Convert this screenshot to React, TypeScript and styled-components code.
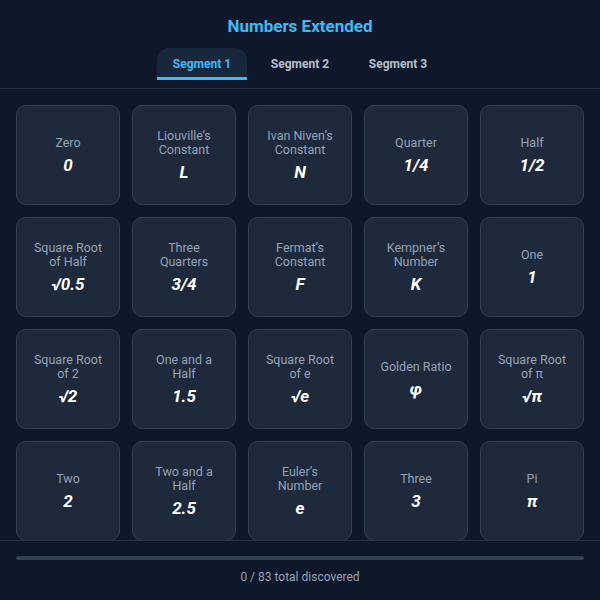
import {FC, useState} from 'react'
import styled, {createGlobalStyle} from 'styled-components'

const GlobalStyle = createGlobalStyle`
    html, body {
        margin: 0;
        padding: 0;
        background: #0f172a;
        font-family: Roboto, "Liberation Sans", sans-serif;
    }
    * {
        box-sizing: border-box;
    }
`

interface NumberItem {
    label: string
    value: string
}

const items: NumberItem[] = [
    {label: 'Zero', value: '0'},
    {label: 'Liouville\u2019s Constant', value: 'L'},
    {label: 'Ivan Niven\u2019s Constant', value: 'N'},
    {label: 'Quarter', value: '1/4'},
    {label: 'Half', value: '1/2'},
    {label: 'Square Root of Half', value: '\u221A0.5'},
    {label: 'Three Quarters', value: '3/4'},
    {label: 'Fermat\u2019s Constant', value: 'F'},
    {label: 'Kempner\u2019s Number', value: 'K'},
    {label: 'One', value: '1'},
    {label: 'Square Root of 2', value: '\u221A2'},
    {label: 'One and a Half', value: '1.5'},
    {label: 'Square Root of e', value: '\u221Ae'},
    {label: 'Golden Ratio', value: '\u03C6'},
    {label: 'Square Root of \u03C0', value: '\u221A\u03C0'},
    {label: 'Two', value: '2'},
    {label: 'Two and a Half', value: '2.5'},
    {label: 'Euler\u2019s Number', value: 'e'},
    {label: 'Three', value: '3'},
    {label: 'Pi', value: '\u03C0'},
]

const segments = ['Segment 1', 'Segment 2', 'Segment 3']

const App: FC = () => {
    const [active, setActive] = useState(0)

    return (
        <>
            <GlobalStyle/>
            <Page>
                <Header>
                    <Title>Numbers Extended</Title>
                    <Tabs>
                        {segments.map((s, i) => (
                            <Tab key={s} $active={i === active} onClick={() => setActive(i)}>
                                {s}
                            </Tab>
                        ))}
                    </Tabs>
                </Header>
                <Scroll>
                    <Grid>
                        {items.map((item) => (
                            <Card key={item.label}>
                                <Label>{item.label}</Label>
                                <Value>{item.value}</Value>
                            </Card>
                        ))}
                    </Grid>
                </Scroll>
                <Footer>
                    <Progress>
                        <ProgressFill style={{width: `${(0 / 83) * 100}%`}}/>
                    </Progress>
                    <Count>0 / 83 total discovered</Count>
                </Footer>
            </Page>
        </>
    )
}

const Page = styled.div`
    display: flex;
    flex-direction: column;
    height: 100vh;
    background: #0f172a;
    color: #e2e8f0;
`

const Header = styled.div`
    display: flex;
    flex-direction: column;
    align-items: center;
    gap: 11px;
    padding: 15px 16px 8px;
    border-bottom: 1px solid #283244;
`

const Title = styled.h1`
    margin: 0;
    font-size: 17px;
    line-height: 22px;
    font-weight: 700;
    color: #38bdf8;
`

const Tabs = styled.div`
    display: flex;
    gap: 8px;
`

const Tab = styled.button<{ $active: boolean }>`
    width: 90px;
    height: 32px;
    padding: 2px 0 0;
    border: none;
    border-bottom: 3px solid ${(p) => (p.$active ? '#38bdf8' : 'transparent')};
    border-radius: 12px 12px 0 0;
    background: ${(p) => (p.$active ? '#17283d' : 'transparent')};
    color: ${(p) => (p.$active ? '#38bdf8' : '#b8c0cc')};
    font-family: inherit;
    font-size: 12px;
    font-weight: 700;
    cursor: pointer;
`

const Scroll = styled.div`
    flex: 1;
    overflow: hidden;
    border-bottom: 1px solid #283244;
`

const Grid = styled.div`
    display: grid;
    grid-template-columns: repeat(5, 1fr);
    gap: 12px;
    padding: 16px;
`

const Card = styled.div`
    height: 100px;
    display: flex;
    flex-direction: column;
    align-items: center;
    justify-content: center;
    gap: 5px;
    padding: 0 10px;
    background: #1e293b;
    border: 1px solid #334155;
    border-radius: 10px;
    text-align: center;
`

const Label = styled.div`
    font-size: 12.5px;
    line-height: 14px;
    color: #94a3b8;
`

const Value = styled.div`
    font-size: 17px;
    line-height: 20px;
    font-weight: 700;
    font-style: italic;
    color: #ffffff;
`

const Footer = styled.div`
    display: flex;
    flex-direction: column;
    align-items: center;
    gap: 10px;
    padding: 15px 16px 16px;
`

const Progress = styled.div`
    width: 100%;
    height: 4px;
    border-radius: 2px;
    background: #334155;
    overflow: hidden;
`

const ProgressFill = styled.div`
    height: 100%;
    background: #38bdf8;
`

const Count = styled.div`
    font-size: 12px;
    line-height: 14px;
    color: #94a3b8;
`

export default App
